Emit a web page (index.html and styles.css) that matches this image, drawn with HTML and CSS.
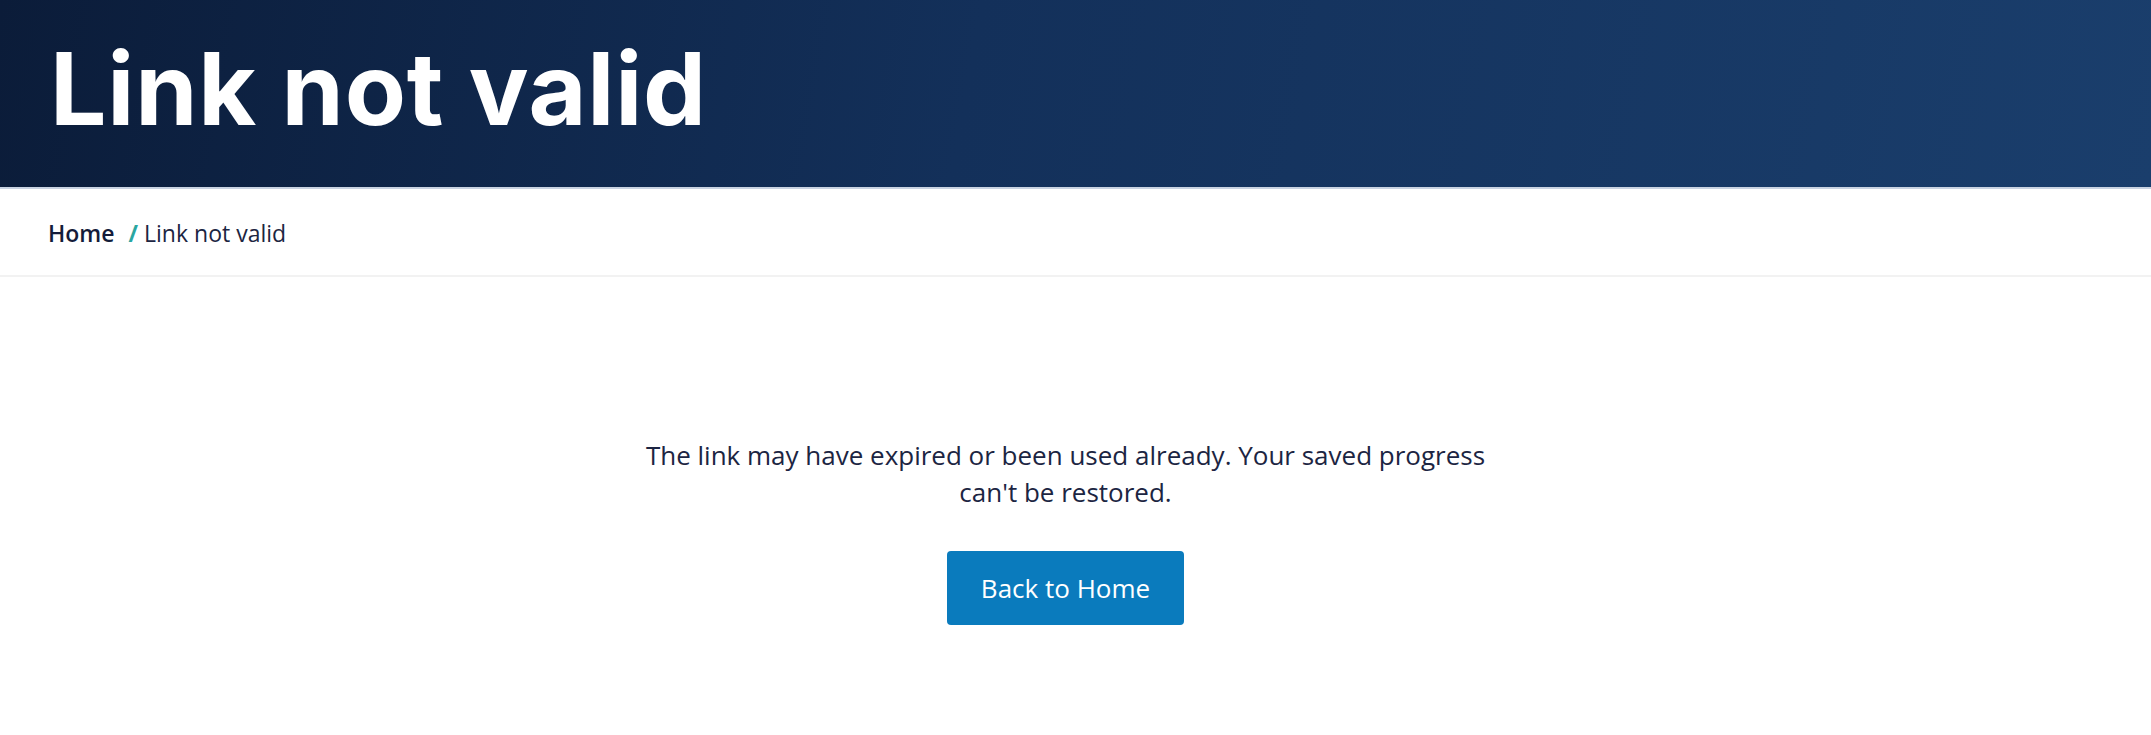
FILE: index.html
```html
<!DOCTYPE html>
<html lang="en">
<head>
<meta charset="utf-8">
<title>Link not valid</title>
<link rel="stylesheet" href="styles.css">
</head>
<body>
<header class="hero">
  <h1 class="hero-title">Link not valid</h1>
</header>
<nav class="breadcrumb">
  <a class="crumb-home" href="#">Home</a>
  <span class="crumb-sep">/</span>
  <span class="crumb-current">Link not valid</span>
</nav>
<main class="content">
  <p class="message">The link may have expired or been used already. Your saved progress can't be restored.</p>
  <a class="btn" href="#">Back to Home</a>
</main>
</body>
</html>
```
FILE: styles.css
```css
html, body {
  margin: 0;
  padding: 0;
  background: #fff;
}
body {
  font-family: "Open Sans", "Noto Sans", sans-serif;
  color: #1c2542;
}
.hero {
  height: 187px;
  background: linear-gradient(100deg, #0b1c39 0%, #13305a 45%, #1a3e6c 100%);
  border-bottom: 2px solid #c9d3e2;
  display: flex;
  align-items: center;
  padding-left: 50px;
  box-sizing: content-box;
}
.hero-title {
  margin: 0;
  font-family: "Inter", "Lato", sans-serif;
  font-weight: 700;
  font-size: 100px;
  line-height: 1;
  color: #fff;
  letter-spacing: 0.8px;
  padding-bottom: 10px;
}
.breadcrumb {
  display: flex;
  align-items: center;
  padding-left: 48px;
  border-bottom: 2px solid #f2f2f2;
  font-size: 23px;
  padding-top: 2px;
  box-sizing: border-box;
  height: 88px;
}
.crumb-home {
  color: #141c3a;
  font-weight: 600;
  text-decoration: none;
}
.crumb-sep {
  color: #2aa6a1;
  font-weight: 700;
  margin: 0 6px 0 14px;
}
.crumb-current {
  color: #1c2542;
}
.content {
  display: flex;
  flex-direction: column;
  align-items: center;
  padding-top: 160px;
  padding-right: 20px;
}
.message {
  margin: 0;
  max-width: 880px;
  text-align: center;
  font-size: 26px;
  line-height: 37px;
  color: #1c2542;
}
.btn {
  margin-top: 40px;
  display: flex;
  align-items: center;
  justify-content: center;
  width: 237px;
  height: 74px;
  box-sizing: border-box;
  background: #0a7bbd;
  color: #fff;
  border-radius: 4px;
  font-size: 26px;
  text-decoration: none;
}
```
